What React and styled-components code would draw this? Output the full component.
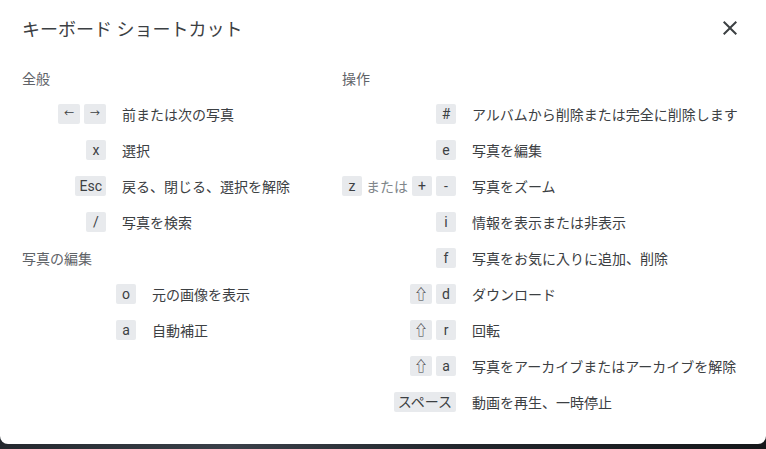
import React from "react";
import styled, { createGlobalStyle } from "styled-components";

const GlobalStyle = createGlobalStyle`
  html, body {
    margin: 0;
    padding: 0;
    height: 100%;
  }
  body {
    background: linear-gradient(90deg, #24282e 0%, #3a4049 30%, #22262c 60%, #15171a 100%);
    font-family: Roboto, "Noto Sans CJK JP", sans-serif;
    overflow: hidden;
  }
`;

const general = [
  { keys: [["←", true], ["→", true]], label: "前または次の写真" },
  { keys: [["x"]], label: "選択" },
  { keys: [["Esc"]], label: "戻る、閉じる、選択を解除" },
  { keys: [["/"]], label: "写真を検索" },
];

const editing = [
  { keys: [["o"]], label: "元の画像を表示" },
  { keys: [["a"]], label: "自動補正" },
];

const actions = [
  { keys: [["#"]], label: "アルバムから削除または完全に削除します" },
  { keys: [["e"]], label: "写真を編集" },
  { keys: [["z"], "または", ["+"], ["-"]], label: "写真をズーム" },
  { keys: [["i"]], label: "情報を表示または非表示" },
  { keys: [["f"]], label: "写真をお気に入りに追加、削除" },
  { keys: [["⇧"], ["d"]], label: "ダウンロード" },
  { keys: [["⇧"], ["r"]], label: "回転" },
  { keys: [["⇧"], ["a"]], label: "写真をアーカイブまたはアーカイブを解除" },
  { keys: [["スペース"]], label: "動画を再生、一時停止" },
];

const Section = ({ title, items, keyWidth }) => (
  <Grid $keyWidth={keyWidth}>
    <Heading>{title}</Heading>
    {items.map((item, i) => (
      <React.Fragment key={i}>
        <Keys>
          {item.keys.map((k, j) =>
            Array.isArray(k) ? (
              <Key key={j} $small={k[1]}>
                {k[0]}
              </Key>
            ) : (
              <Or key={j}>{k}</Or>
            )
          )}
        </Keys>
        <Label>{item.label}</Label>
      </React.Fragment>
    ))}
  </Grid>
);

const App = () => {
  return (
    <>
      <GlobalStyle />
      <Dialog>
        <Header>
          <Title>キーボード ショートカット</Title>
          <CloseButton aria-label="閉じる">
            <svg width="24" height="24" viewBox="0 0 24 24">
              <path
                fill="#3c4043"
                d="M19 6.41L17.59 5 12 10.59 6.41 5 5 6.41 10.59 12 5 17.59 6.41 19 12 13.41 17.59 19 19 17.59 13.41 12z"
              />
            </svg>
          </CloseButton>
        </Header>
        <Body>
          <Column>
            <Section title="全般" items={general} keyWidth={84} />
            <Section title="写真の編集" items={editing} keyWidth={114} />
          </Column>
          <Column>
            <Section title="操作" items={actions} keyWidth={114} />
          </Column>
        </Body>
      </Dialog>
    </>
  );
};

const Dialog = styled.div`
  width: 766px;
  height: 444px;
  background: #ffffff;
  border-radius: 0 0 8px 8px;
  box-sizing: border-box;
`;

const Header = styled.div`
  height: 56px;
  display: flex;
  align-items: center;
  justify-content: space-between;
  padding: 0 24px 0 22px;
`;

const Title = styled.h1`
  margin: 0;
  font-size: 18px;
  font-weight: 400;
  color: #3c4043;
  font-family: Roboto, "Noto Sans CJK JP", sans-serif;
`;

const CloseButton = styled.button`
  width: 24px;
  height: 24px;
  padding: 0;
  border: none;
  background: none;
  display: flex;
  cursor: pointer;
`;

const Body = styled.div`
  margin-top: 4px;
  padding-left: 22px;
  display: grid;
  grid-template-columns: 320px 1fr;
`;

const Column = styled.div`
  display: flex;
  flex-direction: column;
`;

const Grid = styled.div`
  display: grid;
  grid-template-columns: ${(p) => p.$keyWidth}px 1fr;
  grid-auto-rows: 36px;
  column-gap: 16px;
  align-items: center;
`;

const Heading = styled.div`
  grid-column: 1 / -1;
  font-size: 14px;
  color: #5f6368;
`;

const Keys = styled.div`
  display: flex;
  justify-content: flex-end;
  align-items: center;
  gap: 4px;
  white-space: nowrap;
`;

const Key = styled.span`
  flex-shrink: 0;
  min-width: ${(p) => (p.$small ? 22 : 20)}px;
  height: 20px;
  line-height: 20px;
  padding: 0 4px;
  box-sizing: border-box;
  text-align: center;
  font-size: ${(p) => (p.$small ? 10 : 14)}px;
  color: #3c4043;
  background: #e8eaed;
  border-radius: 2px;
`;

const Or = styled.span`
  flex-shrink: 0;
  font-size: 14px;
  color: #80868b;
`;

const Label = styled.div`
  font-size: 14px;
  color: #3c4043;
  white-space: nowrap;
`;

export default App;
